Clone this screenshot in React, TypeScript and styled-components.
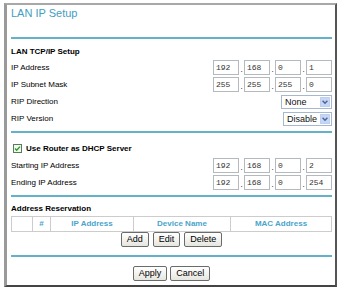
import styled, { createGlobalStyle } from "styled-components";

const GlobalStyle = createGlobalStyle`
  html, body {
    margin: 0;
    padding: 0;
    background: #ffffff;
  }
  body {
    font-family: "Liberation Sans", Arial, sans-serif;
    color: #000;
  }
`;

const Frame = styled.div`
  box-sizing: border-box;
  width: 333px;
  margin: 3px 0 0 4px;
  border-top: 2px solid #a8a8a8;
  border-left: 3px solid #9a9a9a;
  border-right: 2px solid #555555;
  border-bottom: 2px solid #444444;
  background: #ffffff;
`;

const Content = styled.div`
  display: flex;
  flex-direction: column;
  padding: 0 3px 4px 4px;
`;

const Title = styled.div`
  margin-top: 2px;
  height: 13px;
  line-height: 13px;
  font-size: 11px;
  color: #3f9ec2;
`;

const Divider = styled.div<{ $top: number }>`
  margin-top: ${(p) => p.$top}px;
  height: 2px;
  background: #64b2c9;
`;

const SectionHead = styled.div<{ $top: number }>`
  margin-top: ${(p) => p.$top}px;
  height: 12px;
  line-height: 12px;
  font-size: 8px;
  font-weight: 700;
`;

const Rows = styled.div<{ $top: number }>`
  display: flex;
  flex-direction: column;
  margin-top: ${(p) => p.$top}px;
`;

const Row = styled.div`
  display: flex;
  align-items: center;
  justify-content: space-between;
  height: 17px;
`;

const Label = styled.span<{ $bold?: boolean }>`
  font-size: 8px;
  font-weight: ${(p) => (p.$bold ? 700 : 400)};
`;

const CheckLabel = styled.label`
  display: flex;
  align-items: center;
  gap: 4px;
  padding-left: 2px;
`;

const IpGroup = styled.div`
  display: flex;
  align-items: flex-end;
`;

const IpField = styled.div`
  box-sizing: border-box;
  width: 26px;
  height: 15px;
  padding-left: 2px;
  border: 1px solid #b4b9bd;
  font-family: "Liberation Mono", "Courier New", monospace;
  font-size: 8px;
  line-height: 13px;
  color: #333;
`;

const Dot = styled.span`
  width: 5px;
  text-align: center;
  font-size: 8px;
  line-height: 10px;
`;

const Select = styled.div<{ $width: number }>`
  box-sizing: border-box;
  display: flex;
  align-items: center;
  justify-content: space-between;
  width: ${(p) => p.$width}px;
  height: 14px;
  padding: 0 1px 0 3px;
  border: 1px solid #a5b8cf;
  font-size: 9px;
  color: #111;
`;

const Table = styled.div`
  display: grid;
  grid-template-columns: 21px 18px 83px 97px 1fr;
  margin-top: 1px;
  border-top: 1px solid #cccccc;
  border-left: 1px solid #cccccc;
`;

const HeadCell = styled.div`
  height: 14px;
  line-height: 14px;
  border-right: 1px solid #cccccc;
  border-bottom: 1px solid #cccccc;
  text-align: center;
  font-size: 8px;
  font-weight: 700;
  color: #4aa4cc;
`;

const ButtonRow = styled.div<{ $top: number; $gap: number }>`
  display: flex;
  justify-content: center;
  gap: ${(p) => p.$gap}px;
  margin-top: ${(p) => p.$top}px;
`;

const Button = styled.button`
  box-sizing: border-box;
  height: 15px;
  padding: 0 5px;
  border: 1px solid #6b6b6b;
  border-radius: 2px;
  background: linear-gradient(#ffffff, #e6e6e0);
  font-family: "Liberation Sans", Arial, sans-serif;
  font-size: 9px;
  line-height: 13px;
  color: #000;
`;

function CheckIcon() {
  return (
    <svg width="9" height="9" viewBox="0 0 9 9">
      <rect x="0.5" y="0.5" width="8" height="8" fill="#f6f6f0" stroke="#587a5e" />
      <path d="M2 4.4 L3.7 6.2 L7 2.6" fill="none" stroke="#22a322" strokeWidth="1.4" />
    </svg>
  );
}

function ArrowIcon() {
  return (
    <svg width="10" height="10" viewBox="0 0 10 10">
      <rect x="0" y="0" width="10" height="10" rx="1.5" fill="#c6d6f7" stroke="#b0c4ea" strokeWidth="0.8" />
      <path d="M2.6 3.8 L5 6.2 L7.4 3.8" fill="none" stroke="#4c6390" strokeWidth="1.4" />
    </svg>
  );
}

function IpInput({ parts }: { parts: string[] }) {
  return (
    <IpGroup>
      {parts.map((p, i) => (
        <IpGroup key={i}>
          {i > 0 && <Dot>.</Dot>}
          <IpField>{p}</IpField>
        </IpGroup>
      ))}
    </IpGroup>
  );
}

export default function App() {
  return (
    <>
      <GlobalStyle />
      <Frame>
        <Content>
          <Title>LAN IP Setup</Title>
          <Divider $top={17} />

          <SectionHead $top={7}>LAN TCP/IP Setup</SectionHead>
          <Rows $top={1}>
            <Row>
              <Label>IP Address</Label>
              <IpInput parts={["192", "168", "0", "1"]} />
            </Row>
            <Row>
              <Label>IP Subnet Mask</Label>
              <IpInput parts={["255", "255", "255", "0"]} />
            </Row>
            <Row>
              <Label>RIP Direction</Label>
              <Select $width={51}>
                None
                <ArrowIcon />
              </Select>
            </Row>
            <Row>
              <Label>RIP Version</Label>
              <Select $width={49}>
                Disable
                <ArrowIcon />
              </Select>
            </Row>
          </Rows>
          <Divider $top={4} />

          <Rows $top={7}>
            <Row>
              <CheckLabel>
                <CheckIcon />
                <Label $bold>Use Router as DHCP Server</Label>
              </CheckLabel>
            </Row>
            <Row>
              <Label>Starting IP Address</Label>
              <IpInput parts={["192", "168", "0", "2"]} />
            </Row>
            <Row>
              <Label>Ending IP Address</Label>
              <IpInput parts={["192", "168", "0", "254"]} />
            </Row>
          </Rows>
          <Divider $top={4} />

          <SectionHead $top={6}>Address Reservation</SectionHead>
          <Table>
            <HeadCell />
            <HeadCell>#</HeadCell>
            <HeadCell>IP Address</HeadCell>
            <HeadCell>Device Name</HeadCell>
            <HeadCell>MAC Address</HeadCell>
          </Table>
          <ButtonRow $top={0} $gap={4}>
            <Button>Add</Button>
            <Button>Edit</Button>
            <Button>Delete</Button>
          </ButtonRow>
          <Divider $top={8} />

          <ButtonRow $top={9} $gap={3}>
            <Button>Apply</Button>
            <Button>Cancel</Button>
          </ButtonRow>
        </Content>
      </Frame>
    </>
  );
}
